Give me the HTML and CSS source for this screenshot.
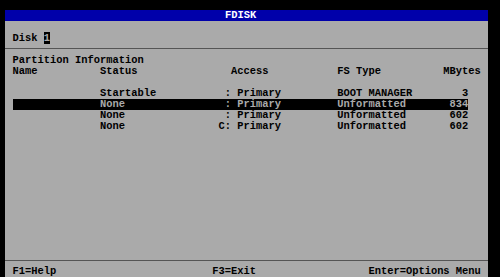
FILE: index.html
```html
<!DOCTYPE html>
<html lang="en">

<head>
    <meta charset="UTF-8">
    <meta name="viewport" content="width=device-width, initial-scale=1.0">
    <title>FDISK</title>
    <link rel="stylesheet" href="styles.css">
</head>

<body>
    <div class="screen">
        <div class="title">FDISK</div>
        <div class="disk">Disk <span class="cursor">1</span></div>
        <div class="rule"></div>

        <div class="partitions">
            <div class="caption">Partition Information</div>
            <div class="row head">
                <span class="c-name">Name</span>
                <span class="c-status">Status</span>
                <span class="c-access">Access</span>
                <span class="c-type">FS Type</span>
                <span class="c-size">MBytes</span>
            </div>

            <div class="list">
                <div class="row">
                    <span class="c-name"></span>
                    <span class="c-status">Startable</span>
                    <span class="c-access"> : Primary</span>
                    <span class="c-type">BOOT MANAGER</span>
                    <span class="c-size">3</span>
                </div>
                <div class="row selected">
                    <span class="c-name"></span>
                    <span class="c-status">None</span>
                    <span class="c-access"> : Primary</span>
                    <span class="c-type">Unformatted</span>
                    <span class="c-size">834</span>
                </div>
                <div class="row">
                    <span class="c-name"></span>
                    <span class="c-status">None</span>
                    <span class="c-access"> : Primary</span>
                    <span class="c-type">Unformatted</span>
                    <span class="c-size">602</span>
                </div>
                <div class="row">
                    <span class="c-name"></span>
                    <span class="c-status">None</span>
                    <span class="c-access">C: Primary</span>
                    <span class="c-type">Unformatted</span>
                    <span class="c-size">602</span>
                </div>
            </div>
        </div>

        <div class="rule"></div>
        <div class="footer">
            <span class="key-help">F1=Help</span>
            <span class="key-exit">F3=Exit</span>
            <span class="key-menu">Enter=Options Menu</span>
        </div>
    </div>
</body>

</html>
```

FILE: styles.css
```css
body {
    margin: 0;
    background-color: #000;
    font-family: "Liberation Mono", "DejaVu Sans Mono", monospace;
    font-size: 10.4167px;
    font-weight: bold;
    line-height: 11px;
    color: #000;
}

.screen {
    display: flex;
    flex-direction: column;
    margin-top: 10px;
    margin-left: 5px;
    width: 483px;
    height: 267px;
    background-color: #aaaaaa;
}

.title {
    height: 11px;
    background-color: #0000aa;
    color: #fff;
    padding-left: 220px;
}

.disk {
    margin-top: 12px;
    padding-left: 7.5px;
}

.cursor {
    background-color: #000;
    color: #aaaaaa;
}

.rule {
    margin-top: 4px;
    border-top: 1px solid #555;
}

.partitions {
    flex: 1;
    padding-left: 7.5px;
    padding-top: 6px;
}

.row {
    display: flex;
    width: 73ch;
    white-space: pre;
}

.row span {
    display: block;
    height: 11px;
}

.c-name {
    width: 14ch;
}

.c-status {
    width: 19ch;
}

.c-access {
    width: 19ch;
}

.head .c-access {
    padding-left: 2ch;
    width: 17ch;
}

.c-type {
    width: 15ch;
}

.c-size {
    width: 6ch;
    text-align: right;
}

.head {
    width: 75ch;
}

.head .c-size {
    width: 8ch;
}

.list {
    margin-top: 11px;
}

.selected {
    background-color: #000;
    color: #aaaaaa;
}

.footer {
    display: flex;
    height: 11px;
    margin-top: 5px;
    padding-left: 7.5px;
    white-space: pre;
}

.key-help {
    width: 32ch;
}

.key-exit {
    width: 25ch;
}
```
